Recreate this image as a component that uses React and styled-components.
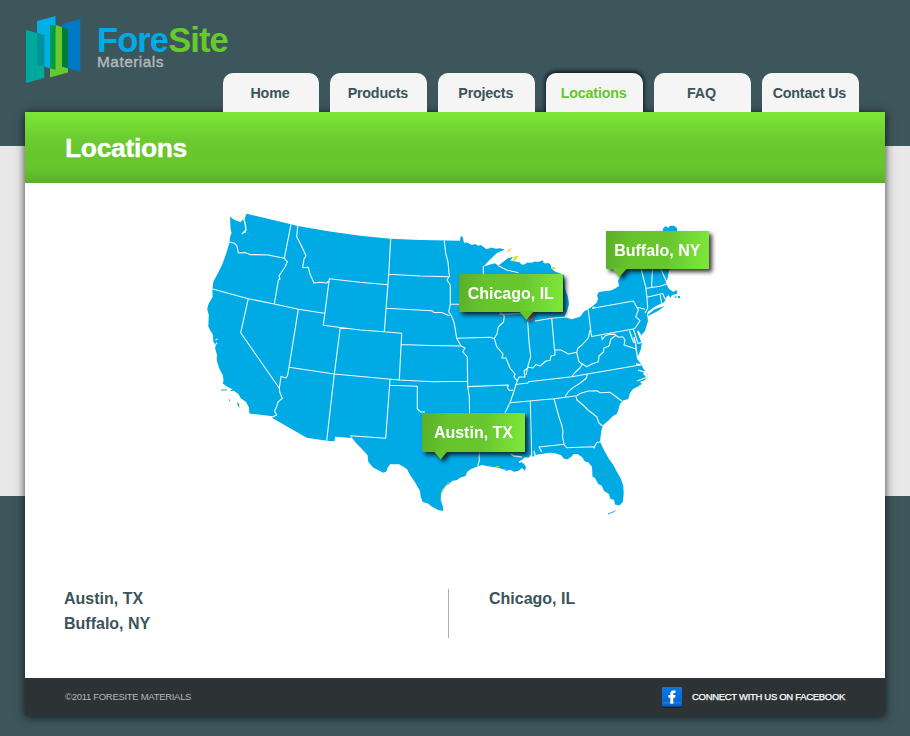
import React from "react";
import styled, { createGlobalStyle } from "styled-components";

const GlobalStyle = createGlobalStyle`
  * { box-sizing: border-box; }
  body {
    margin: 0;
    font-family: "Liberation Sans", Arial, Helvetica, sans-serif;
    background: linear-gradient(#3d565c 146px, #e8e8e8 146px, #e8e8e8 496px, #3d565c 496px) no-repeat #3d565c;
    background-size: 100% 736px;
  }
`;

const Page = styled.div`
  width: 910px;
  height: 736px;
  padding: 0 25px;
  display: flex;
  flex-direction: column;
  overflow: hidden;
`;

const Header = styled.header`
  height: 112px;
  display: flex;
  align-items: flex-end;
  position: relative;
  z-index: 1;
`;

const Brand = styled.div`
  width: 197px;
  height: 98px;
  align-self: flex-start;
  display: flex;
  flex: none;
  padding-top: 14px;
`;

const BrandMark = styled.svg`
  display: block;
  width: 58px;
  height: 72px;
  flex: none;
`;

const BrandText = styled.div`
  padding: 12px 0 0 14px;
  white-space: nowrap;
`;

const BrandName = styled.div`
  font-size: 34.5px;
  line-height: 28px;
  font-weight: bold;
  letter-spacing: -0.9px;
  color: #00aae6;
  span { color: #66c92e; }
`;

const BrandSub = styled.div`
  font-size: 15.4px;
  line-height: 16px;
  color: #b3b8bb;
  -webkit-text-stroke: 0.4px #b3b8bb;
  letter-spacing: 0.5px;
`;

const Nav = styled.nav`
  display: flex;
  gap: 11px;
  padding-left: 0.5px;
`;

const Tab = styled.a`
  width: 96.9px;
  height: 39px;
  padding-right: 2px;
  border-radius: 10px 10px 0 0;
  background: #f5f5f5;
  text-align: center;
  font-size: 14.3px;
  line-height: 41px;
  font-weight: bold;
  letter-spacing: -0.2px;
  white-space: nowrap;
  color: ${(p) => (p.$active ? "#66c72d" : "#3a545a")};
  box-shadow: ${(p) => (p.$active ? "0 -1px 4px 1px rgba(5,15,20,.85)" : "none")};
  clip-path: inset(-10px -10px 0 -10px);
`;

const Panel = styled.main`
  height: 604px;
  display: flex;
  flex-direction: column;
  background: #fff;
  box-shadow: 0 1px 9px rgba(0, 0, 0, 0.75);
`;

const Banner = styled.div`
  height: 71px;
  flex: none;
  padding-left: 40px;
  background: linear-gradient(#7be737, #6bca2f 40%, #66c42d 80%, #5aaf27);
`;

const Title = styled.h1`
  margin: 0;
  font-size: 26.5px;
  line-height: 72px;
  letter-spacing: -0.35px;
  color: #fff;
  -webkit-text-stroke: 0.3px #fff;
`;

const MapArea = styled.section`
  position: relative;
  height: 405px;
  flex: none;
`;

const MapSvg = styled.svg`
  display: block;
  width: 860px;
  height: 405px;
`;

const Pin = styled.div`
  position: absolute;
  left: ${(p) => p.$x}px;
  top: ${(p) => p.$y}px;
  width: 103.5px;
  height: 38.5px;
  filter: drop-shadow(3px 3px 2px rgba(15, 5, 10, 0.8));
`;

const PinFace = styled.div`
  height: 38.5px;
  background: linear-gradient(97deg, #5aae28, #66c32d 25%, #68c72f 60%, #7ce638 96%);
  color: #fff;
  font-size: 16px;
  line-height: 40px;
  font-weight: bold;
  text-align: center;
  white-space: nowrap;
`;

const PinTail = styled.div`
  width: 15px;
  height: 9px;
  margin-top: -1px;
  margin-left: ${(p) => p.$x}px;
  background: #66c42d;
  clip-path: polygon(0 0, 100% 0, 50% 100%);
`;

const Lists = styled.section`
  display: grid;
  grid-template-columns: 384px 1fr;
  margin: 1px 0 0 39px;
  height: 49px;
`;

const List = styled.ul`
  margin: 0;
  padding: 0 0 0 ${(p) => (p.$divided ? "40px" : "0")};
  border-left: ${(p) => (p.$divided ? "1px solid #a9adaf" : "0")};
  list-style: none;
  font-size: 16px;
  line-height: 25px;
  font-weight: bold;
  color: #3a545a;
`;

const Item = styled.li`
  height: 25px;
  &:first-child { margin-top: -3px; }
`;

const Footer = styled.footer`
  margin-top: auto;
  height: 38px;
  padding: 0 40px;
  display: flex;
  align-items: center;
  justify-content: space-between;
  background: #2d3235;
  font-size: 9.5px;
  color: #b5b8b9;
`;

const Copyright = styled.span`
  padding-bottom: 2px;
  letter-spacing: -0.3px;
`;

const Social = styled.a`
  display: flex;
  align-items: center;
  gap: 10px;
  color: #fff;
  letter-spacing: -0.31px;
  -webkit-text-stroke: 0.25px #fff;
`;

const SocialLabel = styled.span`
  padding-bottom: 2px;
`;

const COAST =
  "M230 216.5L233 219 237 221 241 222 242.5 219.5 244.5 221.5 245 218 246 214.5 247 213.8 269 219 291 224.3 297.7 226 330 231.5 360 235.7 390.7 238.7 420 240 460 240.7 460.7 236 462.7 237 464 242.7 467 242.4 469 243.5 472 245 475 244 478 245.7 481 245 483 246.5 486 249 489 248.6 491 247.6 496 248.8 500 248.2 505 249.5 497 253 490 259.5 483.3 266.7 490 264.5 495 263.3 498.3 265.7 503 262 508 258 513 257 510 260.5 516.7 261.7 519 262 522 264.8 525 264.3 527 262.5 532 262.8 534 261.4 538 262 543 260.3 543.5 263 546 263.5 548 262.8 551 265 551 268 555 271.5 564 275 565 289 568 297 569 304 567 311 564.5 317 571.7 319.3 580 316.7 584 311.5 588.3 309.3 596.7 302.7 598 299 597 295 599 292 606 291 611 290.5 615 288.5 619 286 618 281 620 277 627 269 655 255 662 235 663.3 228 666 226 668 228 670 225.7 674 225.8 677 228 677 234 700 250 690 262 669 270 667.7 278 665.8 283 669 289 673 291.7 676 290.7 674.5 288.5 677.4 291.5 676.5 294 672 295 670.5 298 668.5 295 665.7 298 664.5 302 656 306 648 311.5 647 314 648 321 645 331 641 335.5 638 332 636.5 329 638 334 641.7 343.3 641 349 638.5 355 637 359 641 364 643 368 645 371 643 374 645.5 376 645.5 380 640 382 642 384 637 387 633 389 630 393 628.3 399 623 400.5 620 404 618 411 616.7 414 613 416 608.3 420.7 603 425 601.3 431 600 441.7 602.5 447 605 452 609 459 613.3 465 617 472 621 479 623.3 486 623.7 494 622.8 502 619.5 505.5 615 504.5 614 500 610 498.5 609 494 604 491 602 486 598.3 484 595 478 592.5 476.7 592 466.7 588 462 585 461.5 582 457 577.3 454 573.5 454 571.7 456.5 567.5 459.3 563.5 458.6 561.7 455.5 556 453.5 550 452.7 541 454 535 455 533 457 531 454.5 529 457.5 524 457.5 522 460 520 461 524 464 526 467 525 470.7 522 468 518 471 514 471.8 510 469.8 506 470.8 503 469.3 499 468 495 467.3 486.7 466 482 465 476.7 466.7 471 469 467 472 465.5 476 460 477.7 457 480 452 481 450 483.3 446 486 443.3 490 441 495 440.7 500 443 507 443 511 438 510 431.7 506.5 428 503.5 422.7 502 420.7 497 420 491 415.5 483 410 475 407 469 403.3 466.7 399 464.3 390 464.3 387.5 468 386.5 471.5 383.3 472.7 378 470 373 467.5 368.3 461.7 367.5 455 360 447 356 443 350.5 435.7 351 438 335 436.8 334.6 441.3 326.7 440.7 306.7 437.7 272.3 418 272.5 416.3 249.3 413.4 249 407.5 246 402 240.5 398 238.5 394 234 391 231.7 389 227 386.5 222.7 383.4 223.6 380 222.7 375 219 368 216.7 360 217 355 215 348 216 345 213.3 341.7 213 335 208.3 326.7 208.8 315 207.2 309 208.5 304 212.7 296.5 212.4 290 213.3 281.7 218 273 222 265 226 254 229.3 243.3 230 237 231.5 233 230.6 229Z";

const BORDERS = [
  "M229 242L234 243 237 246 238.3 253 245 252.6 250 254.6 255 254.6 268.3 255 284.3 258.3",
  "M291 224.3L284.3 258.3 287.3 261.7 285 267 279 276 280 279 278.4 280 274.3 304",
  "M212.7 289L248.3 298.7 274.3 304 298.3 309.3 324.3 313.3",
  "M297.7 226L296.7 236.7 301 245 306 255.7 304 259 302.7 267.7 308.3 267.3 310 274 314 283 320 282.2 327 283 328.3 281",
  "M388 284.8L360 282.3 329.3 278.7 323.3 325.3 360 330 384.3 331.7 401.7 333.3 399.3 380",
  "M390.7 238.7L388.7 274.3 384.3 331.7",
  "M388.7 274.3L420 276 449.3 276.7",
  "M386 308.3L431.7 310.7 434 312.5 441.7 312.5 449.3 315.7",
  "M444.3 240.7L445.7 253.3 448 262 449 273.3 449.5 276 447 280 450.3 285 450.3 304.3 448.7 311.7 452 317 454.3 323.3 456.7 338.3 461 346 465 348 462.7 351.7 467.3 357 467.7 386.7 469.3 396.7 469.7 420",
  "M450 304.3L465 304.3M456.7 338.3L490 337.3 494 338.5",
  "M401 344.5L430 345.5 461 346",
  "M248.3 298.7L240.7 332.7 279.3 388.3",
  "M298.3 309.3L289 367.3 287.7 375 286 378 281 376.5 279.3 388.3 280 393 282.3 398.3 278 402 276 408.3 274.5 411 276.7 415 272.3 417",
  "M340.3 327.3L334.3 374 326.7 440.7",
  "M289 367.3L334.3 374 399 380 433 381.7 467.7 381.3",
  "M390 379.5L385.7 438.3 350 435.7M389.3 385.3L417.3 386.3V409L421 412 425 412",
  "M467.7 386.6L508.3 385 507.5 388 509.5 390.5 513 390",
  "M480 450L479 457 479.5 460 477.7 466",
  "M498.3 310L504.3 316 503.5 322 498.3 327 497 334 494.3 338.3 496.7 346.7 503 354 502 358 506 358 510 368 515 374 514 377 517.3 380.7 514 391 512 397 510 402.7 505 412.7",
  "M499 314.3L530 313.3M527.7 321.7L529 342 530.7 356.7 527.7 366.7 526 375",
  "M517.3 380.7L519 377 525 377 524 371 528.3 367.3 533 368 536 364.5 540 366 546 361 550 360.5 551 356 555 355 555 350 561 350 568.3 354 576.7 352.3 578 348 582 345 588.3 338 590 330",
  "M535 321L551.7 318.3 554.5 350M551.7 318.3L566 317",
  "M588.3 310L591.5 336.5 633.3 329 635 328.3 640 320.7 635.7 316.7 638.3 310 633.3 301 592.7 308.3 593.5 306.5M636.7 307.3L645 309.3",
  "M601.7 335.7L602.2 339.5 605 336 609 334.5 615 334.3 618 337 623 337 625 340 624 345 630 347 636.7 349.3M633.3 329L636 337 638 343.5 642.7 342",
  "M576.7 352.5L579 361.7 586.7 366.7 592 364 598.3 361.7 599 356 603.3 352 604 348 609 346 611 339 616 335.3",
  "M582.3 364L580 368 575.5 372 571.7 376.7",
  "M515 384.5L528 383 528.3 381.7 571.7 376.7 587.3 374 640 365",
  "M587.3 374L586.5 378 580 383.3 573 387.6 568.3 391.7 565 396.7",
  "M510 402.7L554 398.7 576.7 395.7 580 393.5 588.3 391 597 390.8 600 392.7 610 392.3 621.7 401",
  "M576 395.8L577 400 583 405 588 410 596.7 416.7 599 423 602.5 426",
  "M554 398.7L559 417 561.7 425 563 431 562.5 437 564.3 445 566.7 447.7 593.3 446.7 594 448 596.7 442.5 600 442",
  "M564.3 444.3L539 447 541.7 452M530.3 400.7L531.7 456",
  "M641 269L645.7 286.7 647 298 647.7 308.3 645 313M652.5 269L652 278 651.7 287M646.7 288.3L660 286.3 666.7 284M646.7 297.3L662.7 293.5 665 299M660 294L661.5 303M661 269L663 274 666.7 282",
  "M498.3 265.7L506.7 270 518.3 272.7M483.3 266V274",
];

function UsMap() {
  return (
    <MapSvg viewBox="25 183 860 405" role="img" aria-label="United States">
      <path d={COAST} fill="#00abe5" />
      <path d="M663 236h13v-4h-13zM648 314.5L655 309 665 306 657 311.5 648 316zM221 389.5h6v1h-6zM230 390h3l1 1h-3zM228 399l2 1-.5 1.5zM237 402l2 2 .5 4-2-3zM608 513.5l5-2 4-2-3 2.5-6 2.4zM674 297l3-1-1 2zM678 296h2v2h-2z" fill="#00abe5" />
      <path d={BORDERS.join(" ")} fill="none" stroke="#f2fcff" strokeWidth="1.1" strokeLinejoin="round" />
      <path d="M244.5 221L245.5 226 246 230 242 234M244 231l1.5 1.5M215.5 340l2-1M216 343l1 1M634 337l1.5 6 1 8 1 7M629.5 331l2.5 7 2 5M638 331l3 5M645 372l-7-2M645 378l-8 3M522 457l-8-1-3-2M519 462l4-1M535 455l-1-4M641 365l-5-1" fill="none" stroke="#fff" strokeWidth="1.3" />
      <path d="M526.5 313h8l-2 7-5 1.5z" fill="#bba9a5" />
      <path d="M507.5 250.5l4.5-3-2 3.5-2.5 1zM512.5 260.5l2-4 4-1-2 3.5-2.5 2.5zM552 267h3v2h-3zM242.5 217.7l2-.4-.7 2zM495 466.4l4-.3v1.5zM504 469l2 .5-1 1z" fill="#d9e317" />
      <path d="M441 494l2-5 6-7M647 373l.5 6-1.5 2M642 386l-5 2M566 459.5h3" fill="none" stroke="#e3e849" strokeWidth=".8" />
      <path d="M595 473h16M598 475h12" stroke="#1ea9c8" strokeWidth="1" />
    </MapSvg>
  );
}

function Logo() {
  return (
    <BrandMark viewBox="25 14 58 72" aria-hidden="true">
      <path d="M37 21L55.5 16V70L37 64.5z" fill="#00aee8" />
      <path d="M56 25L68 29V72.5L50 77.6V70z" fill="#69c92c" />
      <path d="M62 24L80.3 19V71.8L62 66.5z" fill="#0078c3" />
      <path d="M26 30L44.3 35V78L26 83z" fill="#00a99e" />
      <path d="M37 33L44.3 35V67L37 64.5z" fill="#00929b" />
      <path d="M50 24.5L55.5 26V70L50 68z" fill="#009a49" />
      <path d="M62 27L68 29V68.3L62 66.5z" fill="#007a3a" />
    </BrandMark>
  );
}

function FacebookIcon() {
  return (
    <svg width="20" height="21" viewBox="0 0 20 21" aria-hidden="true">
      <defs>
        <linearGradient id="fb" x2="0" y2="1">
          <stop stopColor="#0879e5" />
          <stop offset="1" stopColor="#0861c9" />
        </linearGradient>
      </defs>
      <rect y="1" width="20" height="20" rx="1.5" fill="#14202e" />
      <rect width="20" height="19.5" rx="1" fill="url(#fb)" />
      <path d="M1 15.8h18" stroke="#3f8fe6" strokeWidth=".8" />
      <path d="M8.3 16.8V10.8H6.4V8h1.9V6.8c0-2.3 1.2-3.3 3.2-3.3h2v2.6h-1.2c-.8 0-1 .4-1 1.1V8h2.2l-.3 2.8h-1.9v6z" fill="#fff" />
    </svg>
  );
}

const TABS = ["Home", "Products", "Projects", "Locations", "FAQ", "Contact Us"];

const PINS = [
  { name: "Buffalo, NY", x: 580.5, y: 47.5, tail: 6.5 },
  { name: "Chicago, IL", x: 434, y: 90.5, tail: 60 },
  { name: "Austin, TX", x: 396.7, y: 230, tail: 11.5 },
];

export default function App() {
  return (
    <>
      <GlobalStyle />
      <Page>
        <Header>
          <Brand>
            <Logo />
            <BrandText>
              <BrandName>Fore<span>Site</span></BrandName>
              <BrandSub>Materials</BrandSub>
            </BrandText>
          </Brand>
          <Nav>
            {TABS.map((t) => (
              <Tab key={t} $active={t === "Locations"}>{t}</Tab>
            ))}
          </Nav>
        </Header>
        <Panel>
          <Banner><Title>Locations</Title></Banner>
          <MapArea>
            <UsMap />
            {PINS.map((p) => (
              <Pin key={p.name} $x={p.x} $y={p.y}>
                <PinFace>{p.name}</PinFace>
                <PinTail $x={p.tail} />
              </Pin>
            ))}
          </MapArea>
          <Lists>
            <List>
              <Item>Austin, TX</Item>
              <Item>Buffalo, NY</Item>
            </List>
            <List $divided>
              <Item>Chicago, IL</Item>
            </List>
          </Lists>
          <Footer>
            <Copyright>©2011 FORESITE MATERIALS</Copyright>
            <Social>
              <FacebookIcon />
              <SocialLabel>CONNECT WITH US ON FACEBOOK</SocialLabel>
            </Social>
          </Footer>
        </Panel>
      </Page>
    </>
  );
}
